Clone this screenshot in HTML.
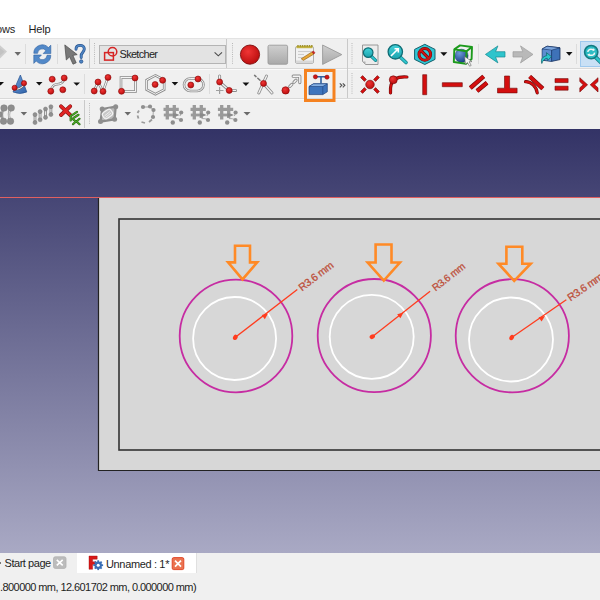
<!DOCTYPE html>
<html><head><meta charset="utf-8">
<style>
*{margin:0;padding:0;box-sizing:border-box}
html,body{width:600px;height:600px;overflow:hidden;background:#f0f0f0;font-family:"Liberation Sans",sans-serif}
.abs{position:absolute}
#menu{position:absolute;left:0;top:0;width:600px;height:39px;background:#fff}
.mt{position:absolute;top:23px;font-size:11px;color:#1e1e1e;letter-spacing:-0.2px}
.row{position:absolute;left:0;width:600px;height:30px;background:#f0f0f0;border-bottom:1px solid #dadada}
.sep{position:absolute;width:1px;background:#d0d0d0}
.hdl{position:absolute;width:1px;border-left:1px dotted #a8a8a8}
.dd{position:absolute;width:0;height:0;border-left:3.5px solid transparent;border-right:3.5px solid transparent;border-top:4px solid #000}
.ddg{border-top-color:#7a7a7a}
svg.i{position:absolute;overflow:visible}
#view{position:absolute;left:0;top:129px;width:600px;height:424px}
#tabs{position:absolute;left:0;top:553px;width:600px;height:20px;background:#f0f0f0}
#status{position:absolute;left:0;top:573px;width:600px;height:27px;background:#f0f0f0}
</style></head><body>
<div id="menu">
  <div class="mt" style="left:-4px">ows</div>
  <div class="mt" style="left:28.5px">Help</div>
</div>
<div class="row" style="top:39px"></div>
<div class="row" style="top:69px"></div>
<div class="row" style="top:99px;border-bottom:none"></div>
<svg class="abs" style="left:0;top:0" width="600" height="129" viewBox="0 0 600 129">
<defs>
  <radialGradient id="gRed" cx="0.4" cy="0.35" r="0.7"><stop offset="0" stop-color="#f03535"/><stop offset="1" stop-color="#b80c0c"/></radialGradient>
  <linearGradient id="gGray" x1="0" y1="0" x2="0" y2="1"><stop offset="0" stop-color="#cfcfcf"/><stop offset="1" stop-color="#a9a9a9"/></linearGradient>
  <linearGradient id="gTeal" x1="0" y1="0" x2="0" y2="1"><stop offset="0" stop-color="#45d3da"/><stop offset="1" stop-color="#1aa3ad"/></linearGradient>
  <linearGradient id="gBlue" x1="0" y1="0" x2="1" y2="1"><stop offset="0" stop-color="#6fa0dc"/><stop offset="1" stop-color="#2f62a8"/></linearGradient>
  <radialGradient id="gSphere" cx="0.35" cy="0.3" r="0.75"><stop offset="0" stop-color="#6f9ad8"/><stop offset="1" stop-color="#173f86"/></radialGradient>
  <g id="rd"><circle r="3" fill="url(#gRed)" stroke="#8a0a0a" stroke-width="0.6"/></g>
  <g id="gd"><circle r="3" fill="#8c8c8c" stroke="#6e6e6e" stroke-width="0.5"/></g>
</defs>
<!-- row separators / borders -->
<g stroke-width="1" fill="none">
  <line x1="0" y1="38.5" x2="600" y2="38.5" stroke="#e3e3e3"/>
  <line x1="0" y1="68.5" x2="600" y2="68.5" stroke="#d9d9d9"/>
  <line x1="0" y1="69.5" x2="600" y2="69.5" stroke="#fafafa"/>
  <line x1="0" y1="98.5" x2="600" y2="98.5" stroke="#d9d9d9"/>
  <line x1="0" y1="99.5" x2="600" y2="99.5" stroke="#fafafa"/>
</g>
<!-- toolbar end lines & handles -->
<g stroke="#c9c9c9" stroke-width="1">
  <line x1="89.5" y1="39" x2="89.5" y2="68"/>
  <line x1="226.5" y1="39" x2="226.5" y2="68"/>
  <line x1="347.5" y1="39" x2="347.5" y2="98"/>
  <line x1="84.5" y1="100" x2="84.5" y2="128"/>
</g>
<g stroke="#b8b8b8" stroke-width="1" stroke-dasharray="1 1.2">
  <line x1="94.5" y1="43" x2="94.5" y2="65"/>
  <line x1="232.5" y1="43" x2="232.5" y2="65"/>
  <line x1="352" y1="43" x2="352" y2="65"/>
  <line x1="352" y1="73" x2="352" y2="95"/>
  <line x1="89.5" y1="103" x2="89.5" y2="125"/>
</g>
<!-- small separators -->
<g stroke="#dcdcdc" stroke-width="1">
  <line x1="25.5" y1="44" x2="25.5" y2="64"/>
  <line x1="57.5" y1="44" x2="57.5" y2="64"/>
  <line x1="478.5" y1="44" x2="478.5" y2="64"/>
  <line x1="576.5" y1="44" x2="576.5" y2="64"/>
  <line x1="84.5" y1="74" x2="84.5" y2="94"/>
  <line x1="209.5" y1="74" x2="209.5" y2="94"/>
</g>
<!-- dropdown arrows -->
<g fill="#111">
  <path d="M440.3 52.3 H447.3 L443.8 56 Z"/>
  <path d="M566 52 H572.5 L569.2 55.7 Z"/>
  <path d="M-3 82 H4 L0.5 85.5 Z"/>
  <path d="M36 82 H42.5 L39.2 85.6 Z"/>
  <path d="M73.4 82.4 H80 L76.7 85.8 Z"/>
  <path d="M171.6 82 H178.2 L174.9 85.6 Z"/>
  <path d="M242.5 82.5 H249.3 L245.9 86 Z"/>
</g>
<g fill="#6a6a6a">
  <path d="M14.5 52 H21 L17.8 55.8 Z"/>
  <path d="M20.6 112 H27.1 L23.9 115.5 Z"/>
  <path d="M124.5 112 H131 L127.7 115.5 Z"/>
  <path d="M243.5 112 H250.5 L247 115.6 Z"/>
</g>

<!-- ===== ROW 1 ===== -->
<path d="M0 45.2 L7 51.6 L0 58.6 Z" fill="#cdcdcd"/><path d="M0 48 L4.5 51.8 L0 55.5 Z" fill="#c2c2c2"/>
<!-- refresh -->
<g fill="#5289c9" stroke="#2e609f" stroke-width="0.6" stroke-linejoin="round">
  <path id="rfa" d="M33.8 53.3 A8.4 8.4 0 0 1 48.4 47.6 L50.8 45.2 V53.6 H43.2 L45.9 50.7 A4.6 4.6 0 0 0 37.6 53.3 Z"/>
  <use href="#rfa" transform="rotate(180 42.3 54.3)"/>
</g>
<!-- whats this -->
<path d="M64.8 44.9 L66.3 60 L69.6 56.8 L73 64.2 L76.2 62.8 L72.9 55.4 L77.2 54.6 Z" fill="#787878" stroke="#4a4a4a" stroke-width="0.7" stroke-linejoin="round"/>
<path d="M76 49.3 C76 46.6 78 45.4 80.2 45.4 C82.6 45.4 84.3 46.9 84.3 49.1 C84.3 52 81.2 52.8 81.2 55.4 L81.2 57.5" fill="none" stroke="#2a5590" stroke-width="2.9" stroke-linecap="round"/>
<path d="M76 49.3 C76 46.6 78 45.4 80.2 45.4 C82.6 45.4 84.3 46.9 84.3 49.1 C84.3 52 81.2 52.8 81.2 55.4 L81.2 57.5" fill="none" stroke="#4f86c4" stroke-width="1.5" stroke-linecap="round"/>
<circle cx="81.2" cy="61.5" r="1.7" fill="#4f86c4" stroke="#2a5590" stroke-width="0.8"/>
<!-- combobox -->
<rect x="99.5" y="45.5" width="126" height="18" fill="#e3e3e3" stroke="#b4b4b4"/>
<rect x="104.6" y="52.6" width="8.8" height="7.5" fill="none" stroke="#d62424" stroke-width="1.5"/>
<circle cx="112.5" cy="51.8" r="4.3" fill="none" stroke="#d62424" stroke-width="1.5"/>
<path d="M214.6 52.3 L218.3 55.8 L222 52.3" fill="none" stroke="#4a4a4a" stroke-width="1.1"/>

<!-- macro record -->
<circle cx="250" cy="54.6" r="9.6" fill="url(#gRed)" stroke="#7d1010" stroke-width="0.9"/>
<rect x="268" y="45.2" width="19.6" height="19" rx="1.5" fill="url(#gGray)" stroke="#9a9a9a" stroke-width="0.9"/>
<!-- macro editor notepad -->
<rect x="295.5" y="46.5" width="18" height="16.9" rx="1.5" fill="#f2f2f2" stroke="#a8a8a8" stroke-width="0.9"/>
<rect x="296" y="60.5" width="17" height="2.6" fill="#d8d8d8"/>
<rect x="296.5" y="46" width="16" height="2.2" fill="#c2b240"/>
<g fill="#9a8a20"><circle cx="298" cy="45.8" r="0.9"/><circle cx="300.3" cy="45.8" r="0.9"/><circle cx="302.6" cy="45.8" r="0.9"/><circle cx="304.9" cy="45.8" r="0.9"/><circle cx="307.2" cy="45.8" r="0.9"/><circle cx="309.5" cy="45.8" r="0.9"/><circle cx="311.8" cy="45.8" r="0.9"/></g>
<g stroke="#cdcdcd" stroke-width="1.1"><line x1="298" y1="51.5" x2="311" y2="51.5"/><line x1="298" y1="54.5" x2="304" y2="54.5"/><line x1="298" y1="57.5" x2="306" y2="57.5"/></g>
<path d="M301.2 58.8 L311.8 52 L314 54 L303.4 60.4 Z" fill="#e8a838" stroke="#8a5a18" stroke-width="0.6" stroke-linejoin="round"/>
<path d="M311.8 52 L313.4 50.9 L315 52.8 L314 54 Z" fill="#d42424" stroke="#8a1010" stroke-width="0.4"/>
<!-- play -->
<path d="M322.6 45 L341.8 54.6 L322.6 64.4 Z" fill="url(#gGray)" stroke="#9a9a9a" stroke-width="0.9" stroke-linejoin="round"/>

<!-- view fit all -->
<path d="M362.5 45 H378 V64.5 H365.5 L362.5 61.5 Z" fill="#ececec" stroke="#8f8f8f" stroke-width="0.9"/><path d="M362.5 61.5 L365.5 61.5 V64.5 Z" fill="#b0b0b0"/>
<line x1="369" y1="54" x2="375.6" y2="60.4" stroke="#137f88" stroke-width="3.2" stroke-linecap="round"/>
<line x1="369" y1="54" x2="375.6" y2="60.4" stroke="#2fc4cc" stroke-width="1.8" stroke-linecap="round"/>
<circle cx="368.2" cy="52.6" r="4.8" fill="url(#gTeal)" stroke="#0f6c74" stroke-width="1.2"/>
<!-- view fit selection -->
<line x1="398" y1="55" x2="406" y2="62.5" stroke="#137f88" stroke-width="3.6" stroke-linecap="round"/>
<line x1="398" y1="55" x2="406" y2="62.5" stroke="#2fc4cc" stroke-width="2.2" stroke-linecap="round"/>
<circle cx="395.3" cy="51.8" r="7.2" fill="url(#gTeal)" stroke="#0f6c74" stroke-width="1.3"/>
<path d="M391 56 L397.5 49.5 M394.5 48.8 H398.3 V52.6" fill="none" stroke="#fff" stroke-width="1.6"/>
<!-- draw style hexagon -->
<path d="M424.8 44.3 L435 49.4 V59.4 L424.8 64.5 L414.6 59.4 V49.4 Z" fill="#30c6d4" stroke="#16606c" stroke-width="1"/>
<circle cx="424.8" cy="54.4" r="5.8" fill="none" stroke="#6a0808" stroke-width="3"/>
<line x1="420.8" y1="50.4" x2="428.8" y2="58.4" stroke="#6a0808" stroke-width="3"/>
<circle cx="424.8" cy="54.4" r="5.8" fill="none" stroke="#cc1414" stroke-width="2"/>
<line x1="420.8" y1="50.4" x2="428.8" y2="58.4" stroke="#cc1414" stroke-width="2"/>
<!-- box selection -->
<circle cx="461.5" cy="55.8" r="6.6" fill="url(#gSphere)" stroke="#1d3a70" stroke-width="0.5"/>
<g fill="none" stroke="#1c9a1c" stroke-width="1.9" stroke-linejoin="round">
  <path d="M454.3 49.4 L466.5 51.3 L466 63.8 L453.8 62 Z"/>
  <path d="M454.3 49.4 L460 45.4 L472 47 L466.5 51.3 M472 47 L471.6 59 L466 63.8"/>
</g>
<path d="M464.6 56.4 L465.4 64.5 L467.4 62.6 L469.6 66.2 L471.2 65.4 L469.2 61.8 L472 61.6 Z" fill="#f6f6f6" stroke="#606060" stroke-width="0.6" stroke-linejoin="round"/>
<!-- back / forward -->
<path d="M485.4 54.4 L497.9 45.9 L495.6 51.7 H505 V57 H495.6 L497.9 62.9 Z" fill="#2ec4cc" stroke="#178a90" stroke-width="0.7" stroke-linejoin="round"/>
<path d="M533 54.4 L520.5 45.9 L522.8 51.7 H513 V57 H522.8 L520.5 62.9 Z" fill="#b9b9b9" stroke="#9c9c9c" stroke-width="0.7" stroke-linejoin="round"/>
<!-- cube -->
<path d="M542.2 49 L547 46.2 L560 47.8 V59.6 L551.6 61.4 L542.2 60.2 Z" fill="#3e72b8" stroke="#142e5c" stroke-width="0.8" stroke-linejoin="round"/>
<path d="M542.2 49 L547 46.2 L560 47.8 L551.6 50.2 Z" fill="#7aa4dc" stroke="#142e5c" stroke-width="0.6" stroke-linejoin="round"/>
<path d="M542.6 49.4 L551.2 50.6 V61 L542.6 59.8 Z" fill="#5d8ed0"/>
<line x1="551.6" y1="50.2" x2="551.6" y2="61.4" stroke="#142e5c" stroke-width="0.7"/>
<path d="M541.8 63.5 C540.5 59.5 542.5 56.5 546.8 55.6 L546.4 52.6 L551.4 56.6 L547.6 60.6 L547.2 58.2 C544.5 58.6 542.8 60.5 541.8 63.5 Z" fill="#2cc6cc" stroke="#0f5e64" stroke-width="0.7" stroke-linejoin="round"/>
<!-- highlighted sync view button -->
<rect x="580.5" y="41.5" width="25" height="25" fill="#c9e0f5" stroke="#9fc9ee"/>
<line x1="596" y1="57.5" x2="603" y2="64.5" stroke="#137f88" stroke-width="4" stroke-linecap="round"/>
<line x1="596" y1="57.5" x2="603" y2="64.5" stroke="#2fc4cc" stroke-width="2.4" stroke-linecap="round"/>
<circle cx="591.2" cy="52.1" r="6.6" fill="#2bbcc4" stroke="#147a80" stroke-width="1.6"/>
<path d="M587.8 52 C588 49.3 590.5 48.6 593.8 49.8 M594.6 52.6 C594.4 55.3 591.9 56 588.6 54.8" fill="none" stroke="#f0f4f4" stroke-width="1.5"/>
<path d="M593 48.3 L595.2 50 L592.6 51.2 Z M589.4 56.3 L587.2 54.6 L589.8 53.4 Z" fill="#f0f4f4"/>
<!-- ===== ROW 2 ===== -->
<!-- cone -->
<path d="M20.4 75 L13 92 Q20 95 26.8 92 Z" fill="url(#gBlue)" stroke="#24508f" stroke-width="0.7" stroke-linejoin="round"/>
<path d="M16.5 89.2 Q21 89 24 84.5" fill="none" stroke="#555" stroke-width="2"/>
<path d="M16.5 89.2 Q21 89 24 84.5" fill="none" stroke="#f6f6f6" stroke-width="1.1"/>
<circle cx="14.6" cy="87.8" r="2.6" fill="url(#gRed)" stroke="#8a0a0a" stroke-width="0.6"/>
<circle cx="24" cy="83.2" r="2.6" fill="url(#gRed)" stroke="#8a0a0a" stroke-width="0.6"/>
<!-- bspline -->
<path d="M51.3 89.5 C52.5 85.5 54 84.5 57.5 84.2 C61 84 62.5 83 63.8 80" fill="none" stroke="#8c8c8c" stroke-width="2.6"/>
<path d="M51.3 89.5 C52.5 85.5 54 84.5 57.5 84.2 C61 84 62.5 83 63.8 80" fill="none" stroke="#fff" stroke-width="1"/>
<use href="#rd" x="52.2" y="79.2"/><use href="#rd" x="64.2" y="78"/><use href="#rd" x="50.8" y="91.2"/><use href="#rd" x="62.8" y="89.8"/>
<!-- polyline -->
<path d="M94.2 91 L98 82 L103 91.4 L108 77.4" fill="none" stroke="#8e8e8e" stroke-width="2.6"/>
<path d="M94.2 91 L98 82 L103 91.4 L108 77.4" fill="none" stroke="#fff" stroke-width="1"/>
<use href="#rd" x="94.2" y="91"/><use href="#rd" x="98" y="82"/><use href="#rd" x="103" y="91.4"/><use href="#rd" x="108" y="77.4"/>
<!-- rectangle -->
<rect x="121" y="77.5" width="14.5" height="14" fill="none" stroke="#8e8e8e" stroke-width="2.6"/>
<rect x="121" y="77.5" width="14.5" height="14" fill="none" stroke="#fff" stroke-width="0.9"/>
<use href="#rd" x="135" y="78"/><use href="#rd" x="121.5" y="91.3"/>
<!-- hexagon -->
<path d="M155.4 75.4 L164.2 80 V89.6 L155.4 94.2 L146.6 89.6 V80 Z" fill="none" stroke="#8e8e8e" stroke-width="2.6"/>
<path d="M155.4 75.4 L164.2 80 V89.6 L155.4 94.2 L146.6 89.6 V80 Z" fill="none" stroke="#fff" stroke-width="0.9"/>
<use href="#rd" x="155.1" y="84.5"/><use href="#rd" x="162.6" y="80.3"/>
<!-- slot -->
<rect x="184" y="78.5" width="19.5" height="12.5" rx="6.2" fill="none" stroke="#8e8e8e" stroke-width="2.6"/>
<rect x="184" y="78.5" width="19.5" height="12.5" rx="6.2" fill="none" stroke="#fff" stroke-width="0.9"/>
<use href="#rd" x="190.8" y="85"/><use href="#rd" x="198" y="79"/>
<!-- fillet -->
<g stroke="#8c8c8c" stroke-width="3" fill="none" stroke-linecap="round"><path d="M219.6 76 V82 L229.2 90.4 H235.6"/></g>
<g stroke="#f4f4f4" stroke-width="1.3" fill="none" stroke-linecap="round"><path d="M219.6 76 V82 L229.2 90.4 H235.6"/></g>
<g stroke="#a0a0a0" stroke-width="1.2" fill="none"><path d="M219.6 87 V94 M216 90.5 H223.5"/></g>
<use href="#rd" x="219.6" y="82"/><use href="#rd" x="229.2" y="90.4"/>
<!-- trim -->
<g stroke="#8c8c8c" stroke-width="3" fill="none" stroke-linecap="round"><path d="M266.5 76 L258.8 93 M263.5 83.4 L272 93"/></g>
<g stroke="#f4f4f4" stroke-width="1.3" fill="none" stroke-linecap="round"><path d="M266.5 76 L258.8 93 M263.5 83.4 L272 93"/></g>
<path d="M254.6 75.4 L256 76.6 M257.8 78.2 L260 80.2" stroke="#777" stroke-width="1.5" stroke-linecap="round"/>
<use href="#rd" x="263.5" y="83.4"/>
<!-- extend -->
<g stroke="#8c8c8c" stroke-width="3.2" fill="none" stroke-linecap="round" stroke-linejoin="round"><path d="M293.2 76.2 H299.8 V82.6"/><path d="M289.8 86.4 L291.8 84.4 M294 82.2 L296 80.2"/></g>
<g stroke="#f4f4f4" stroke-width="1.4" fill="none" stroke-linecap="round" stroke-linejoin="round"><path d="M293.2 76.2 H299.8 V82.6"/><path d="M289.8 86.4 L291.8 84.4 M294 82.2 L296 80.2"/></g>
<circle cx="285.6" cy="90.4" r="3.7" fill="url(#gRed)" stroke="#8a0a0a" stroke-width="0.6"/>
<!-- external geometry (highlighted) -->
<rect x="305.5" y="70.5" width="28.5" height="30" fill="none" stroke="#f58220" stroke-width="3"/>
<path d="M309 86.5 L313.5 83.8 H327.3 V91.8 L322.8 94.6 H309 Z" fill="#3d74bd" stroke="#1d3f7a" stroke-width="0.7" stroke-linejoin="round"/>
<path d="M309 86.5 L313.5 83.8 H327.3 L322.8 86.5 Z" fill="#86b0e4" stroke="#1d3f7a" stroke-width="0.6" stroke-linejoin="round"/>
<line x1="322.8" y1="86.5" x2="322.8" y2="94.6" stroke="#1d3f7a" stroke-width="0.6"/>
<path d="M315.4 76.8 H327 M321 77 V83.5" stroke="#2f5f9f" stroke-width="1.6"/>
<circle cx="315.4" cy="76.8" r="2.1" fill="#d01515" stroke="#7a0a0a" stroke-width="0.5"/>
<circle cx="327" cy="77.2" r="2.1" fill="#d01515" stroke="#7a0a0a" stroke-width="0.5"/>
<path d="M339.8 83.3 L341.8 85.3 L339.8 87.3 M342.8 83.3 L344.8 85.3 L342.8 87.3" fill="none" stroke="#555" stroke-width="1.2"/>

<!-- constraints -->
<g fill="#d40f0f" stroke="#6e0a0a" stroke-width="0.6" stroke-linejoin="round">
  <circle cx="370" cy="84.5" r="4.3" fill="url(#gRed)"/>
  <path d="M360.6 77.6 L362.6 75.6 L366.4 79.4 L364.4 81.4 Z"/>
  <path d="M379.4 77.6 L377.4 75.6 L373.6 79.4 L375.6 81.4 Z"/>
  <path d="M360.6 91.4 L362.6 93.4 L366.4 89.6 L364.4 87.6 Z"/>
  <path d="M379.4 91.4 L377.4 93.4 L373.6 89.6 L375.6 87.6 Z"/>
  <rect x="422.7" y="74.7" width="4" height="20"/>
  <rect x="442.3" y="82.7" width="20" height="4"/>
  <path d="M470.3 88 L483.7 76.4" stroke-width="4.4" stroke="#6e0a0a" stroke-linecap="butt"/>
  <path d="M477 91 L487 82.7" stroke-width="4.4" stroke="#6e0a0a"/>
  <path d="M497.5 88.2 H504.5 V76 H509.6 V88.2 H517.1 V92.9 H497.5 Z"/>
  <rect x="555" y="78.6" width="13.1" height="4"/>
  <rect x="555" y="86.2" width="13.1" height="4"/>
  <path d="M579.8 77.7 L587.6 84.8 L579.8 92 V87.8 L583.2 84.8 L579.8 81.6 Z"/>
  <path d="M598 77.7 L590.2 84.8 L598 92 V87.8 L594.6 84.8 L598 81.6 Z"/>
</g>
<path d="M470.3 88 L483.7 76.4 M477 91 L487 82.7" stroke="#d40f0f" stroke-width="3.2"/>
<path d="M390.5 92.9 C390 86 391.5 81.5 395 79 C398.5 77 402 76.6 406.9 77" fill="none" stroke="#6e0a0a" stroke-width="3.2" stroke-linecap="round"/>
<path d="M390.5 92.9 C390 86 391.5 81.5 395 79 C398.5 77 402 76.6 406.9 77" fill="none" stroke="#d40f0f" stroke-width="2" stroke-linecap="round"/>
<circle cx="393.3" cy="79.8" r="4" fill="url(#gRed)" stroke="#6e0a0a" stroke-width="0.6"/>
<path d="M529.7 76.5 L542.8 88.7" stroke="#6e0a0a" stroke-width="4.4"/>
<path d="M529.7 76.5 L542.8 88.7" stroke="#d40f0f" stroke-width="3.2"/>
<path d="M525.5 81.7 C531 81.5 536.5 86.5 537.2 92.9" fill="none" stroke="#6e0a0a" stroke-width="3.2" stroke-linecap="round"/>
<path d="M525.5 81.7 C531 81.5 536.5 86.5 537.2 92.9" fill="none" stroke="#d40f0f" stroke-width="2" stroke-linecap="round"/>

<!-- ===== ROW 3 ===== -->
<path d="M11 108 C8.5 112 8.5 117 10.5 121.2" fill="none" stroke="#9c9c9c" stroke-width="2.4"/>
<path d="M11 108 C8.5 112 8.5 117 10.5 121.2" fill="none" stroke="#eee" stroke-width="0.9"/>
<path d="M4 108 C1.5 112 1.5 117 3.5 121.2" fill="none" stroke="#9c9c9c" stroke-width="2.4"/>
<g fill="#8e8e8e" stroke="#7a7a7a" stroke-width="0.4">
  <circle cx="-1" cy="114.5" r="3"/>
  <circle cx="4" cy="108" r="3.3"/><circle cx="11.2" cy="108" r="3.3"/><circle cx="3.5" cy="121.2" r="3.3"/><circle cx="10.5" cy="121.2" r="3.3"/>
</g>
<g stroke="#8e8e8e" stroke-width="2.8" fill="none"><path d="M35 114.6 V122.6 M40.1 111.6 V119.8 M45.5 109 V117.4 M50.9 106.7 V114.6"/></g>
<g stroke="#f2f2f2" stroke-width="0.9" fill="none"><path d="M35 116.5 V120.5 M40.1 113.5 V118 M45.5 111 V115.5 M50.9 108.6 V112.6"/></g>
<g fill="#909090" stroke="#7a7a7a" stroke-width="0.5">
  <circle cx="35" cy="114.6" r="2"/><circle cx="35" cy="122.6" r="2"/>
  <circle cx="40.1" cy="111.6" r="2"/><circle cx="40.1" cy="119.8" r="2"/>
  <circle cx="45.5" cy="109" r="2"/><circle cx="45.5" cy="117.4" r="2"/>
  <circle cx="50.9" cy="106.7" r="2"/><circle cx="50.9" cy="114.6" r="2"/>
</g>
<!-- delete all -->
<path d="M61 106.3 L70.2 115 M70.2 106.3 L61 115" stroke="#7a1010" stroke-width="3.8" stroke-linecap="round"/>
<path d="M61 106.3 L70.2 115 M70.2 106.3 L61 115" stroke="#e02424" stroke-width="2.8" stroke-linecap="round"/>
<g stroke="#2a6a12" stroke-width="2.2" fill="none" stroke-linecap="round">
  <path d="M71.8 115.3 L77 111.8 M73.5 118 L78.5 114.8 M70.7 115.5 V120.5"/>
  <path d="M72.5 118.8 L75.8 121.5 L73 124.2 M79.5 118.8 L76.5 121.5 L79.5 124.2"/>
</g>
<g stroke="#4caa28" stroke-width="1.1" fill="none" stroke-linecap="round">
  <path d="M71.8 115.3 L77 111.8 M73.5 118 L78.5 114.8 M70.7 115.5 V120.5"/>
  <path d="M72.5 118.8 L75.8 121.5 L73 124.2 M79.5 118.8 L76.5 121.5 L79.5 124.2"/>
</g>
<!-- rotated square w/ hatch -->
<path d="M102.2 109 L115.7 106.7 L114.6 119.3 L100.5 121.6 Z" fill="#b9b9b9" stroke="#8c8c8c" stroke-width="2.2" stroke-linejoin="round"/>
<rect x="102.5" y="110.5" width="10" height="7" rx="2.5" transform="rotate(-35 107.5 114)" fill="#c8c8c8" stroke="#f2f2f2" stroke-width="1.2"/>
<path d="M104.5 116 L110 111.5 M105.5 117.5 L111 113" stroke="#f2f2f2" stroke-width="0.9"/>
<g fill="#8e8e8e"><circle cx="102.2" cy="109" r="2.5"/><circle cx="115.7" cy="106.7" r="2.5"/><circle cx="114.6" cy="119.3" r="2.5"/><circle cx="100.5" cy="121.6" r="2.5"/></g>
<!-- polar dashed circle -->
<g fill="none" stroke="#9a9a9a" stroke-width="1.8">
  <path d="M139 110.5 L137.5 113"/><path d="M137.5 115.5 L138.5 118.5"/><path d="M141.5 122 L145 123"/><path d="M149 122 L152 119.5"/>
</g>
<path d="M143 107 H150 L153.5 110 L153 117" fill="none" stroke="#bcbcbc" stroke-width="1.4"/>
<g fill="#8e8e8e"><circle cx="143" cy="107" r="2.1"/><circle cx="150" cy="106.5" r="2.1"/><circle cx="153.5" cy="110" r="2.1"/><circle cx="153" cy="117" r="2.1"/></g>
<!-- grids x3 -->
<g id="grid1">
  <path d="M167.3 105 V119.5 M174.3 105 V118 M163.5 109.3 H178.8" stroke="#9a9a9a" stroke-width="3.3" fill="none"/>
  <path d="M163.8 115 H173" stroke="#9a9a9a" stroke-width="2.8" fill="none"/>
  <path d="M173 113.2 Q177 113.5 179.5 115 Q177 116.5 173 116.8 Z" fill="#8a8a8a"/>
  <path d="M174.5 118.5 Q178 118.2 181 119.8 M181.2 112.5 L180 116" stroke="#aaaaaa" stroke-width="1" fill="none"/>
  <g fill="#8e8e8e"><circle cx="172.8" cy="122.5" r="2.2"/><circle cx="181.2" cy="112.5" r="2.1"/><circle cx="181" cy="120" r="2.1"/></g>
</g>
<use href="#grid1" x="27" y="0"/>
<use href="#grid1" x="54.4" y="0"/>
</svg>

<div class="abs" style="left:119.5px;top:48.3px;font-size:11px;letter-spacing:-0.7px;color:#1e1e1e">Sketcher</div>

<svg id="view" width="600" height="424" viewBox="0 129 600 424">
  <defs>
    <linearGradient id="bg" x1="0" y1="0" x2="0" y2="1">
      <stop offset="0" stop-color="#333366"/>
      <stop offset="1" stop-color="#a9a9c4"/>
    </linearGradient>
  </defs>
  <rect x="0" y="129" width="600" height="424" fill="url(#bg)"/>
  <rect x="98" y="197" width="510" height="274" fill="#d7d7d7"/>
  <line x1="0" y1="197.5" x2="600" y2="197.5" stroke="#e06060" stroke-width="1"/>
  <path d="M98.5 198 V470.5 H600" fill="none" stroke="#222" stroke-width="1.2"/>
  <rect x="119" y="219" width="500" height="231" fill="none" stroke="#333" stroke-width="1.6"/>
  <!-- circles -->
  <g fill="none" stroke-width="1.8">
    <circle cx="236" cy="336" r="56.3" stroke="#c62ca2"/>
    <circle cx="374.3" cy="335.6" r="56.6" stroke="#c62ca2"/>
    <circle cx="512.3" cy="335.8" r="56.6" stroke="#c62ca2"/>
    <circle cx="234.6" cy="338.5" r="41.5" stroke="#fff"/>
    <circle cx="371.7" cy="336.8" r="42" stroke="#fff"/>
    <circle cx="511" cy="339.5" r="42" stroke="#fff"/>
  </g>

  <!-- arrows -->
  <g fill="none" stroke="#ff8a26" stroke-width="2.6" stroke-linejoin="miter">
    <path d="M235 245.7 H250 V262.4 H257.2 L242.5 279.4 L228.1 262.4 H235 Z"/>
    <path d="M375.6 244.5 H391.5 V262.5 H399.9 L383.8 280.5 L367.7 262.5 H375.6 Z"/>
    <path d="M506.4 246.8 H522.3 V263.7 H530.7 L514.2 280.9 L498.5 263.7 H506.4 Z"/>
  </g>
  <!-- radius lines -->
  <g stroke="#ff3c1e" stroke-width="1.3" fill="#ff3c1e">
    <line x1="235.3" y1="337.3" x2="297.3" y2="289.6"/>
    <line x1="372.3" y1="336.7" x2="430.1" y2="291.3"/>
    <line x1="511.7" y1="337.5" x2="566.3" y2="299.7"/>
  </g>
  <g fill="#ff3c1e">
    <path d="M0 0 L-6 -2.6 L-6 2.6 Z" transform="translate(268 313.5) rotate(-37.6)"/>
    <path d="M0 0 L-6 -2.6 L-6 2.6 Z" transform="translate(403.5 312.5) rotate(-38.1)"/>
    <path d="M0 0 L-6 -2.6 L-6 2.6 Z" transform="translate(545 316) rotate(-34.7)"/>
    <ellipse cx="235.3" cy="337.3" rx="2.2" ry="2.8" transform="rotate(30 235.3 337.3)"/>
    <ellipse cx="372.3" cy="336.7" rx="2.2" ry="2.8" transform="rotate(60 372.3 336.7)"/>
    <ellipse cx="511.7" cy="337.5" rx="2.2" ry="2.8" transform="rotate(30 511.7 337.5)"/>
  </g>
  <g fill="#bd4f3a" stroke="#bd4f3a" stroke-width="0.3" font-family="Liberation Sans, sans-serif" font-size="10.5px" letter-spacing="-0.3">
    <text transform="translate(302 291.5) rotate(-37.6)">R3.6 mm</text>
    <text transform="translate(435.5 291.5) rotate(-38.1)" font-size="10px">R3.6 mm</text>
    <text transform="translate(570.5 301.5) rotate(-34.7)">R3.6 mm</text>
  </g>
</svg>

<div id="tabs">
  <svg class="abs" style="left:0;top:0" width="600" height="20">
    <path d="M-2 8 L1 10 L-2 12" fill="none" stroke="#666" stroke-width="1"/>
    <rect x="53.5" y="3.8" width="12.5" height="11.6" rx="1.8" fill="#bcbcbc" stroke="#b0b0b0" stroke-width="0.8"/>
    <path d="M56.8 6.8 L62.7 12.4 M62.7 6.8 L56.8 12.4" stroke="#fff" stroke-width="1.6"/>
    <rect x="77" y="0" width="119" height="20" fill="#fff"/>
    <line x1="196.5" y1="0" x2="196.5" y2="20" stroke="#e0e0e0"/>
    <path d="M89 3 H97.2 V6.2 H92.6 V8.8 H96 V11.4 H92.6 V16.3 H89 Z" fill="#d81818" stroke="#a00c0c" stroke-width="0.4"/>
    <g transform="translate(98.2 12.2)">
      <circle r="3.7" fill="#3a6fb5"/>
      <g fill="#3a6fb5"><rect x="-0.9" y="-4.9" width="1.8" height="9.8"/><rect x="-0.9" y="-4.9" width="1.8" height="9.8" transform="rotate(45)"/><rect x="-0.9" y="-4.9" width="1.8" height="9.8" transform="rotate(90)"/><rect x="-0.9" y="-4.9" width="1.8" height="9.8" transform="rotate(135)"/></g>
      <circle r="1.5" fill="#fff"/>
    </g>
    <rect x="172.2" y="4.6" width="11.6" height="12" rx="1.5" fill="#ea7350" stroke="#e03e20" stroke-width="0.9"/>
    <path d="M175 7.6 L181 13.6 M181 7.6 L175 13.6" stroke="#fff" stroke-width="1.7"/>
  </svg>
  <div class="abs" style="left:4.5px;top:4px;font-size:11px;letter-spacing:-0.45px;color:#1e1e1e">Start page</div>
  <div class="abs" style="left:106px;top:5px;font-size:11px;letter-spacing:-0.35px;color:#1e1e1e">Unnamed : 1*</div>
</div>
<div id="status"><div class="abs" style="left:0px;top:8px;font-size:11px;letter-spacing:-0.57px;color:#1e1e1e">.800000 mm, 12.601702 mm, 0.000000 mm)</div></div>
</body></html>
